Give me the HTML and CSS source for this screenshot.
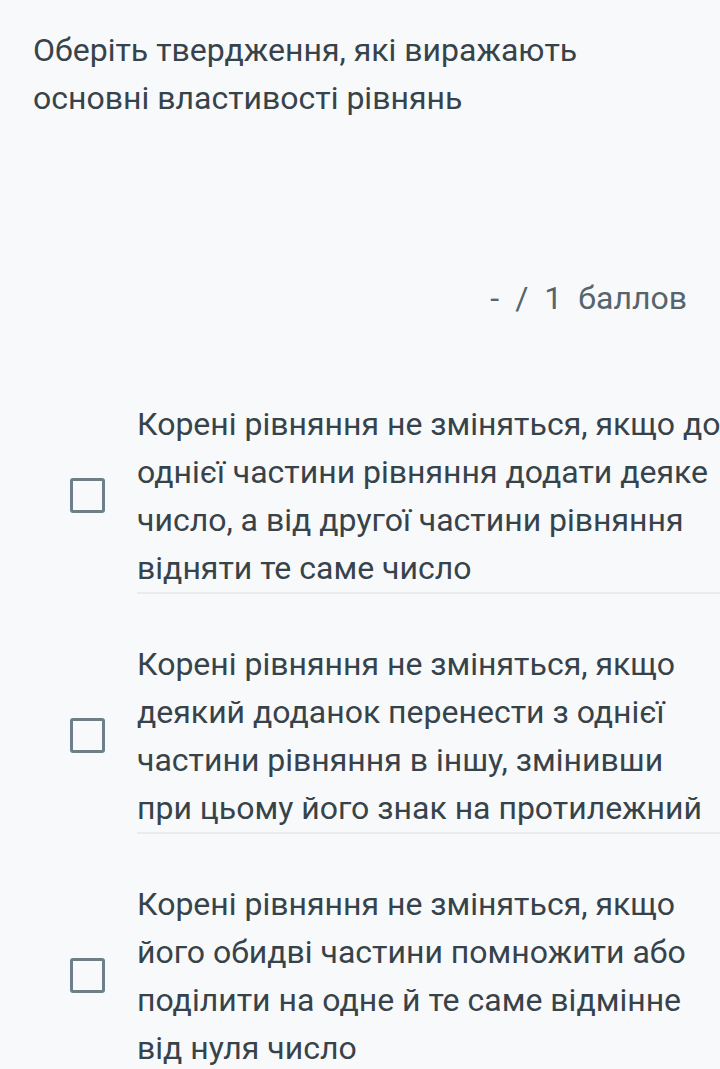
FILE: index.html
```html
<!DOCTYPE html>
<html lang="uk">
<head>
    <meta charset="UTF-8" />
    <meta name="viewport" content="width=device-width, initial-scale=1.0"/>
    <title>Питання</title>
    <link rel="stylesheet" href="styles.css">
</head>
<body>

<div class="question">
    <!-- Текст питання -->
    <div class="question-text">Оберіть твердження, які виражають основні властивості рівнянь</div>

    <!-- Бали -->
    <div class="points">
        <span>-</span>
        <span>/</span>
        <span>1</span>
        <span>баллов</span>
    </div>

    <!-- Варіанти відповіді -->
    <div class="options">
        <label class="option">
            <span class="checkbox"></span>
            <span class="option-text">Корені рівняння не зміняться, якщо до однієї частини рівняння додати деяке число, а від другої частини рівняння відняти те саме число</span>
        </label>
        <label class="option">
            <span class="checkbox"></span>
            <span class="option-text">Корені рівняння не зміняться, якщо деякий доданок перенести з однієї частини рівняння в іншу, змінивши при цьому його знак на протилежний</span>
        </label>
        <label class="option">
            <span class="checkbox"></span>
            <span class="option-text">Корені рівняння не зміняться, якщо його обидві частини помножити або поділити на одне й те саме відмінне від нуля число</span>
        </label>
    </div>
</div>

</body>
</html>
```

FILE: styles.css
```css
body {
    margin: 0;
    padding: 0;
    font-family: Roboto, "Noto Sans", sans-serif;
    background: #F8F9FB;
    color: #37434A;
    overflow-x: hidden;
}

.question {
    padding: 26px 0 0 33px;
}

.question-text {
    font-size: 32px;
    line-height: 48px;
    width: 600px;
}

.points {
    margin-top: 152px;
    padding-right: 33px;
    display: flex;
    justify-content: flex-end;
    gap: 16px;
    font-size: 32px;
    line-height: 48px;
    color: #56646C;
}

.options {
    margin-top: 78px;
}

.option {
    display: flex;
    align-items: center;
    padding-top: 46px;
}

.option:first-child {
    padding-top: 0;
}

.checkbox {
    flex: none;
    width: 29px;
    height: 29px;
    border: 3px solid #6F7F8A;
    border-radius: 3px;
    margin: 0 32px 4px 37px;
}

.option-text {
    flex: none;
    width: 584px;
    font-size: 32px;
    line-height: 48px;
    border-bottom: 2px solid #E9ECEF;
    padding-right: 40px;
}
```
